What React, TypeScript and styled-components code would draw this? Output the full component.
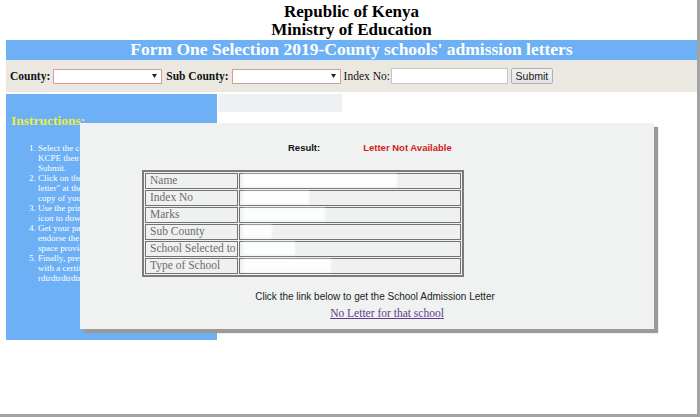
import React from 'react';
import styled, { createGlobalStyle } from 'styled-components';

const GlobalStyle = createGlobalStyle`
  html, body { margin: 0; padding: 0; background: #ffffff; }
  body { font-family: "Liberation Serif", "Times New Roman", serif; }
`;

const Page = styled.div`
  position: relative;
  box-sizing: border-box;
  width: 700px;
  height: 417px;
  padding-left: 6px;
  border-right: 3px solid #a3a3a3;
  border-bottom: 3px solid #a3a3a3;
  overflow: hidden;
`;

const Masthead = styled.header`
  padding-top: 3px;
  text-align: center;
`;

const MastLine = styled.div`
  font: bold 17px/18px "Liberation Serif", serif;
  color: #000;
`;

const TitleBar = styled.h1`
  margin: 1px 0 0;
  height: 20px;
  box-sizing: border-box;
  padding-bottom: 2px;
  background: #6db0f6;
  color: #ffffff;
  text-align: center;
  font: bold 17.5px/18px "Liberation Serif", serif;
`;

const FilterBar = styled.form`
  display: flex;
  align-items: center;
  gap: 3px;
  height: 32px;
  padding-left: 4px;
  background: #eae8e1;
`;

const FieldLabel = styled.label<{ $bold?: boolean; $push?: number }>`
  font-family: "Liberation Serif", serif;
  font-size: 11.5px;
  font-weight: ${(p) => (p.$bold ? 'bold' : 'normal')};
  color: #111;
  margin-left: ${(p) => p.$push ?? 0}px;
  white-space: nowrap;
`;

const SelectBox = styled.div`
  width: 109px;
  height: 15px;
  box-sizing: border-box;
  border: 1px solid #d59c9c;
  background: #fff;
  display: flex;
  align-items: center;
  justify-content: flex-end;
  padding-right: 4px;
`;

const IndexGroup = styled.div`
  display: flex;
  align-items: center;
  gap: 1px;
`;

const TextInput = styled.input`
  width: 117px;
  height: 16px;
  box-sizing: border-box;
  border: 1px solid #c6c6c6;
  background: #fff;
  padding: 0;
  margin: 0;
`;

const SubmitButton = styled.button`
  width: 42px;
  height: 16px;
  box-sizing: border-box;
  padding: 0;
  border: 1px solid #b0b0b0;
  border-radius: 2px;
  background: linear-gradient(#f3f3f3, #e3e3e3);
  color: #222;
  font: 10.5px/14px "Liberation Sans", Arial, sans-serif;
`;

const BodyRow = styled.div`
  display: flex;
  align-items: flex-start;
  gap: 1px;
  margin-top: 2px;
`;

const Sidebar = styled.aside`
  width: 211px;
  height: 246px;
  box-sizing: border-box;
  padding: 19px 0 0 5px;
  background: #6db0f6;
  overflow: hidden;
`;

const SideHeading = styled.h3`
  margin: 0;
  font: bold 13.5px "Liberation Serif", serif;
  color: #e6ef47;
`;

const Steps = styled.ol`
  margin: 13.5px 0 0;
  padding-left: 27px;
  font: 9px "Liberation Serif", serif;
  color: #ffffff;
  white-space: nowrap;
`;

const MainColumn = styled.main`
  flex: 1;
`;

const Placeholder = styled.div`
  width: 124px;
  height: 18px;
  background: #eef1f1;
`;

const Dialog = styled.section`
  position: absolute;
  left: 80px;
  top: 123px;
  width: 574px;
  height: 206px;
  box-sizing: border-box;
  padding-top: 19px;
  background: #eff2f1;
  box-shadow: 4px 4px 1px #9a9a9a;
`;

const ResultRow = styled.div`
  display: flex;
  padding-left: 208px;
  font: bold 9.5px/11.5px "Liberation Sans", Arial, sans-serif;
`;

const ResultLabel = styled.span`
  color: #111;
`;

const ResultValue = styled.span`
  color: #cf1c1c;
  margin-left: 43px;
`;

const DetailsTable = styled.table`
  margin: 16.5px 0 0 62px;
  width: 322px;
  border: 2px solid #7b7b7b;
  border-spacing: 1px;
`;

const LabelCell = styled.td`
  width: 86px;
  height: 14px;
  box-sizing: content-box;
  padding: 0 1px 0 4px;
  border: 1px solid #737373;
  font: 11.5px/13px "Liberation Serif", serif;
  color: #6c6c6c;
  white-space: nowrap;
  background: #eff1f0;
  vertical-align: top;
`;

const ValueCell = styled.td`
  padding: 1px 0 0 4px;
  border: 1px solid #737373;
  background: #eef1f0;
  vertical-align: top;
`;

const Redacted = styled.span<{ $w: number }>`
  display: block;
  width: ${(p) => p.$w}px;
  height: 11px;
  background: #fcfdfd;
  box-shadow: 0 0 2px 1px rgba(255, 255, 255, 0.85);
`;

const LinkBlock = styled.div`
  margin-top: 14px;
  padding-left: 16px;
  text-align: center;
`;

const LinkHint = styled.div`
  font: 10px/11.5px "Liberation Sans", Arial, sans-serif;
  color: #222;
`;

const LetterLink = styled.a`
  display: inline-block;
  margin-left: 24px;
  font: 11.5px "Liberation Serif", serif;
  color: #5f3b8b;
  text-decoration: underline;
`;

const Caret = () => (
  <svg width="5" height="4" viewBox="0 0 5 4" aria-hidden="true">
    <path d="M0 0 H5 L2.5 4 Z" fill="#222" />
  </svg>
);

const rows: { label: string; w: number }[] = [
  { label: 'Name', w: 152 },
  { label: 'Index No', w: 64 },
  { label: 'Marks', w: 80 },
  { label: 'Sub County', w: 27 },
  { label: 'School Selected to', w: 50 },
  { label: 'Type of School', w: 86 },
];

const steps: string[][] = [
  ['Select the county and', 'KCPE then index no.', 'Submit.'],
  ['Click on the "Get', 'letter" at the bottom', 'copy of your letter.'],
  ['Use the print or', 'icon to download.'],
  ['Get your parent to', 'endorse the letter', 'space provided.'],
  ['Finally, present the', 'with a certified', 'rdtrdtrdtrdtrd'],
];

export default function App() {
  return (
    <>
      <GlobalStyle />
      <Page>
        <Masthead>
          <MastLine>Republic of Kenya</MastLine>
          <MastLine>Ministry of Education</MastLine>
        </Masthead>
        <TitleBar>Form One Selection 2019-County schools' admission letters</TitleBar>
        <FilterBar onSubmit={(e) => e.preventDefault()}>
          <FieldLabel $bold>County:</FieldLabel>
          <SelectBox>
            <Caret />
          </SelectBox>
          <FieldLabel $bold $push={1}>Sub County:</FieldLabel>
          <SelectBox>
            <Caret />
          </SelectBox>
          <IndexGroup>
            <FieldLabel>Index No:</FieldLabel>
            <TextInput type="text" />
          </IndexGroup>
          <SubmitButton type="submit">Submit</SubmitButton>
        </FilterBar>
        <BodyRow>
          <Sidebar>
            <SideHeading>Instructions:</SideHeading>
            <Steps>
              {steps.map((lines, i) => (
                <li key={i}>
                  {lines.map((line, j) => (
                    <React.Fragment key={j}>
                      {j > 0 && <br />}
                      {line}
                    </React.Fragment>
                  ))}
                </li>
              ))}
            </Steps>
          </Sidebar>
          <MainColumn>
            <Placeholder />
          </MainColumn>
        </BodyRow>
        <Dialog>
          <ResultRow>
            <ResultLabel>Result:</ResultLabel>
            <ResultValue>Letter Not Available</ResultValue>
          </ResultRow>
          <DetailsTable>
            <tbody>
              {rows.map((r) => (
                <tr key={r.label}>
                  <LabelCell>{r.label}</LabelCell>
                  <ValueCell>
                    <Redacted $w={r.w} />
                  </ValueCell>
                </tr>
              ))}
            </tbody>
          </DetailsTable>
          <LinkBlock>
            <LinkHint>Click the link below to get the School Admission Letter</LinkHint>
            <LetterLink href="#">No Letter for that school</LetterLink>
          </LinkBlock>
        </Dialog>
      </Page>
    </>
  );
}
